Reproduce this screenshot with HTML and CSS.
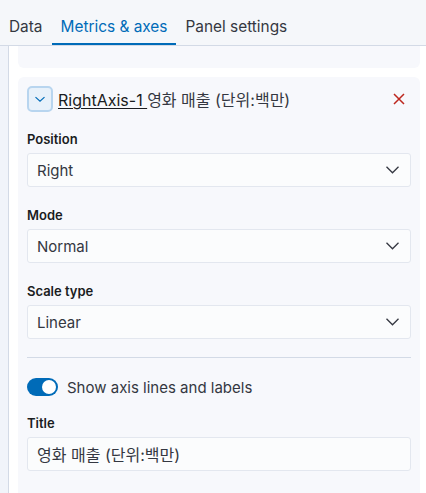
FILE: index.html
```html
<!DOCTYPE html>
<html>
<head>
<meta charset="utf-8">
<link rel="stylesheet" href="styles.css">
</head>
<body>
<div class="tabs">
  <div class="tab">Data</div>
  <div class="tab active">Metrics &amp; axes</div>
  <div class="tab">Panel settings</div>
</div>
<div class="body">
  <div class="gutter"></div>
  <div class="content">
    <div class="card card-prev"></div>
    <div class="card">
      <div class="acc-head">
        <span class="acc-btn">
          <svg width="12" height="12" viewBox="0 0 16 16"><path d="M2 5.5 L8 11 L14 5.5" fill="none" stroke="#006bb8" stroke-width="1.6"/></svg>
        </span>
        <span class="acc-title"><u>RightAxis-1 </u>영화 매출 (단위:백만)</span>
        <span class="close">
          <svg width="12" height="12" viewBox="0 0 12 12"><path d="M1 1 L11 11 M11 1 L1 11" stroke="#bd271e" stroke-width="1.5"/></svg>
        </span>
      </div>
      <div class="field">
        <div class="label">Position</div>
        <div class="select"><span>Right</span><svg width="13" height="8" viewBox="0 0 13 8"><path d="M0.5 0.8 L6.5 6.8 L12.5 0.8" fill="none" stroke="#343741" stroke-width="1.3"/></svg></div>
      </div>
      <div class="field">
        <div class="label">Mode</div>
        <div class="select"><span>Normal</span><svg width="13" height="8" viewBox="0 0 13 8"><path d="M0.5 0.8 L6.5 6.8 L12.5 0.8" fill="none" stroke="#343741" stroke-width="1.3"/></svg></div>
      </div>
      <div class="field">
        <div class="label">Scale type</div>
        <div class="select"><span>Linear</span><svg width="13" height="8" viewBox="0 0 13 8"><path d="M0.5 0.8 L6.5 6.8 L12.5 0.8" fill="none" stroke="#343741" stroke-width="1.3"/></svg></div>
      </div>
      <div class="divider"></div>
      <div class="switch-row">
        <span class="switch"><span class="knob"></span></span>
        <span class="switch-label">Show axis lines and labels</span>
      </div>
      <div class="field">
        <div class="label">Title</div>
        <div class="input"><span class="ko">영화 매출 (단위:백만)</span></div>
      </div>
    </div>
  </div>
</div>
</body>
</html>
```

FILE: styles.css
```css
* { box-sizing: border-box; }
html, body { margin: 0; padding: 0; }
body {
  font-family: Inter, "Noto Sans CJK KR", sans-serif;
  color: #343741;
  background: #fff;
  width: 426px;
  height: 493px;
  overflow: hidden;
}
.tabs {
  display: flex;
  align-items: flex-end;
  height: 46px;
  background: #f5f7fa;
  border-bottom: 1px solid #d3dae6;
}
.tab {
  padding: 18px 9px 0;
  font-size: 15.4px;
  line-height: 18px;
  height: 45px;
  color: #343741;
}
.tab.active {
  color: #006bb8;
  box-shadow: inset 0 -2px 0 #006bb8;
}
.body {
  display: flex;
  height: 447px;
}
.gutter {
  width: 9px;
  background: #f1f4fa;
  border-right: 1px solid #d3dae6;
  flex: none;
}
.content {
  flex: 1;
  padding: 0 6px 0 9px;
  display: flex;
  flex-direction: column;
  gap: 9px;
}
.card {
  background: #f7f8fc;
  border-radius: 6px;
  padding: 9px 9px 40px;
}
.card-prev {
  height: 22px;
  border-radius: 0 0 6px 6px;
  padding: 0;
  flex: none;
}
.acc-head {
  display: flex;
  align-items: center;
  height: 26px;
}
.acc-btn {
  width: 26px;
  height: 26px;
  border: 2px solid #b8d5ef;
  background: #e8f1fa;
  border-radius: 5px;
  display: flex;
  align-items: center;
  justify-content: center;
  flex: none;
}
.acc-title {
  margin-left: 5px;
  font-size: 16px;
  color: #343741;
  flex: 1;
}
.acc-title u {
  color: #1a1c21;
  text-decoration-thickness: 1px;
  text-underline-offset: 2px;
}
.close {
  display: flex;
  margin-right: 6px;
}
.field {
  margin-top: 20px;
}
.card > .acc-head + .field { margin-top: 19px; }
.label {
  font-size: 13px;
  font-weight: 600;
  line-height: 16px;
  color: #1a1c21;
  margin-bottom: 6px;
}
.select, .input {
  height: 34px;
  background: #fbfcfd;
  border: 1px solid #e3e7ef;
  border-radius: 3px;
  display: flex;
  align-items: center;
  padding: 0 11px 0 9px;
  font-size: 15px;
  color: #343741;
}
.select span { flex: 1; }
.input .ko { font-size: 16px; }
.divider {
  height: 1px;
  background: #d3dae6;
  margin-top: 18px;
}
.switch-row {
  display: flex;
  align-items: center;
  margin-top: 19px;
  height: 20px;
}
.switch {
  width: 31px;
  height: 18px;
  border-radius: 9px;
  background: #006bb8;
  position: relative;
  flex: none;
}
.knob {
  position: absolute;
  right: 2px;
  top: 2px;
  width: 14px;
  height: 14px;
  border-radius: 50%;
  background: #fff;
}
.switch-label {
  margin-left: 9px;
  font-size: 15px;
  color: #343741;
}
.switch-row + .field { margin-top: 18px; }
```
